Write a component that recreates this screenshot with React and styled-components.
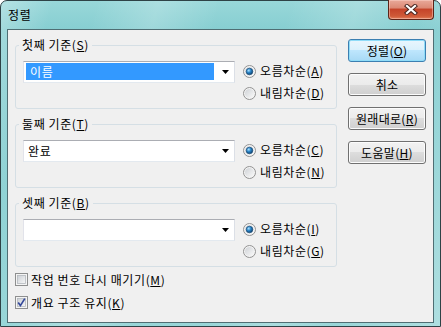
import styled, { createGlobalStyle } from "styled-components";

const GlobalStyle = createGlobalStyle`
  html, body {
    margin: 0;
    padding: 0;
    background: #ffffff;
  }
  body {
    font-family: "Noto Sans CJK KR", "Noto Sans", sans-serif;
    font-size: 12px;
    letter-spacing: 0.6px;
    color: #000;
  }
`;

const Frame = styled.div`
  box-sizing: border-box;
  width: 441px;
  height: 327px;
  display: flex;
  flex-direction: column;
  padding: 0 6px 3px;
  border: 1px solid #2e4246;
  border-radius: 7px 7px 0 0;
  background:
    linear-gradient(105deg,
      rgba(255, 255, 255, 0.28) 0%,
      rgba(255, 255, 255, 0) 10%,
      rgba(255, 255, 255, 0) 18%,
      rgba(255, 255, 255, 0.2) 30%,
      rgba(255, 255, 255, 0) 42%,
      rgba(255, 255, 255, 0) 55%,
      rgba(255, 255, 255, 0.18) 68%,
      rgba(255, 255, 255, 0) 80%,
      rgba(255, 255, 255, 0.22) 100%),
    linear-gradient(180deg, #98d7d9 0%, #86ced1 30px, #98d6d8 100%);
`;

const TitleBar = styled.div`
  height: 28px;
  display: flex;
  align-items: flex-start;
`;

const Title = styled.span`
  padding: 7px 0 0 1px;
  line-height: 14px;
  font-size: 12px;
`;

const CloseButton = styled.div`
  box-sizing: border-box;
  margin: -1px 0 0 auto;
  width: 46px;
  height: 20px;
  display: flex;
  align-items: center;
  justify-content: center;
  border: 1px solid #5b2418;
  border-top: none;
  border-radius: 0 0 4px 4px;
  background: linear-gradient(180deg, #e9a99a 0%, #dc8a76 40%, #c5442a 50%, #cf5a38 85%, #e2805c 100%);
  box-shadow: inset 0 0 0 1px rgba(255, 220, 210, 0.45);
`;

const Client = styled.div`
  flex: 1;
  display: flex;
  gap: 11px;
  padding: 8px 6px 0 7px;
  border: 1px solid #4f6e73;
  background: #f0f0f0;
`;

const LeftColumn = styled.div`
  width: 322px;
  display: flex;
  flex-direction: column;
`;

const Group = styled.fieldset`
  box-sizing: border-box;
  width: 322px;
  min-width: 0;
  margin: 0 0 8px;
  padding: 8px 7px 4px;
  border: 1px solid #d5dfe5;
  border-radius: 3px;
`;

const Legend = styled.legend`
  margin-left: -4px;
  padding: 0 3px;
  line-height: 14px;
  font-size: 12px;
`;

const GroupRow = styled.div`
  display: flex;
  align-items: flex-start;
`;

const Combo = styled.div`
  box-sizing: border-box;
  width: 212px;
  height: 22px;
  margin-top: 1px;
  display: flex;
  align-items: flex-start;
  padding: 1px 0 2px 2px;
  border: 1px solid #abadb3;
  border-left-color: #e2e3ea;
  border-right-color: #dbdfe6;
  border-bottom-color: #e3e9ef;
  background: #ffffff;
`;

const ComboValue = styled.div`
  width: 188px;
  height: 17px;
  padding-left: ${(p) => (p.$selected ? "4px" : "2px")};
  box-sizing: border-box;
  line-height: 17px;
  background: ${(p) => (p.$selected ? "#3399ff" : "transparent")};
  color: ${(p) => (p.$selected ? "#ffffff" : "#000000")};
`;

const ComboArrow = styled.div`
  flex: 1;
  height: 17px;
  display: flex;
  align-items: center;
  justify-content: center;
  padding-left: 3px;
`;

const RadioColumn = styled.div`
  margin-left: 8px;
  display: flex;
  flex-direction: column;
`;

const OptionRow = styled.label`
  height: ${(p) => p.$height || 22}px;
  display: flex;
  align-items: center;
  gap: ${(p) => p.$gap || 4}px;
  line-height: 14px;
`;

const Key = styled.u`
  text-decoration: underline;
  text-underline-offset: 1px;
`;

const ChecksBlock = styled.div`
  display: flex;
  flex-direction: column;
  margin-top: -7px;
`;

const ButtonColumn = styled.div`
  display: flex;
  flex-direction: column;
  gap: 11px;
  padding-top: 1px;
`;

const Button = styled.div`
  box-sizing: border-box;
  width: 78px;
  height: 23px;
  display: flex;
  align-items: center;
  justify-content: center;
  border: 1px solid ${(p) => (p.$default ? "#3c7fb1" : "#707070")};
  border-radius: 3px;
  background: ${(p) =>
    p.$default
      ? "linear-gradient(180deg, #eaf6fd 0%, #d9f0fc 50%, #bee6fd 50%, #a7d9f5 100%)"
      : "linear-gradient(180deg, #f2f2f2 0%, #ebebeb 50%, #dddddd 50%, #cfcfcf 100%)"};
  box-shadow: inset 0 0 0 1px ${(p) => (p.$default ? "#8fdcf8" : "#fcfcfc")};
  line-height: 14px;
  letter-spacing: 0.3px;
`;

const RadioIcon = ({ checked }) => (
  <svg width="13" height="13" viewBox="0 0 13 13">
    <defs>
      <linearGradient id="radioBg" x1="0" y1="0" x2="1" y2="1">
        <stop offset="0" stopColor="#cfd2d6" />
        <stop offset="1" stopColor="#fafafa" />
      </linearGradient>
      <radialGradient id="radioDot" cx="0.38" cy="0.35" r="0.7">
        <stop offset="0" stopColor="#aee2ff" />
        <stop offset="0.45" stopColor="#2a86c9" />
        <stop offset="1" stopColor="#0b3a66" />
      </radialGradient>
    </defs>
    <circle cx="6.5" cy="6.5" r="6" fill="#f4f4f4" stroke="#929292" />
    <circle cx="6.5" cy="6.5" r="4.6" fill="url(#radioBg)" />
    {checked && (
      <circle cx="6.5" cy="6.5" r="3.3" fill="url(#radioDot)" stroke="#1b4d78" strokeWidth="0.7" />
    )}
  </svg>
);

const CheckIcon = ({ checked }) => (
  <svg width="13" height="13" viewBox="0 0 13 13">
    <defs>
      <linearGradient id="checkBg" x1="0" y1="0" x2="1" y2="1">
        <stop offset="0" stopColor="#cbcfd5" />
        <stop offset="1" stopColor="#f7f7f7" />
      </linearGradient>
    </defs>
    <rect x="0.5" y="0.5" width="12" height="12" fill="#f4f4f4" stroke="#8e8f8f" />
    <rect x="2.5" y="2.5" width="8" height="8" fill="url(#checkBg)" stroke="#b4b8bd" strokeWidth="0.8" />
    {checked && (
      <path d="M3.2 6.6 L5.4 9.6 L9.8 2.6" fill="none" stroke="#34489a" strokeWidth="1.7" />
    )}
  </svg>
);

const CloseX = () => (
  <svg width="14" height="11" viewBox="0 0 14 11">
    <path d="M3 2 L11 9 M11 2 L3 9" stroke="#4a2620" strokeWidth="4.2" strokeLinecap="square" />
    <path d="M3 2 L11 9 M11 2 L3 9" stroke="#ffffff" strokeWidth="2.2" strokeLinecap="square" />
  </svg>
);

const DownArrow = () => (
  <svg width="7" height="4" viewBox="0 0 7 4">
    <path d="M0 0 H7 L3.5 4 Z" fill="#000" />
  </svg>
);

const Label = ({ text, hotkey }) => (
  <span>
    {text}(<Key>{hotkey}</Key>)
  </span>
);

const groups = [
  { title: "첫째 기준", key: "S", value: "이름", selected: true, asc: "A", desc: "D" },
  { title: "둘째 기준", key: "T", value: "완료", selected: false, asc: "C", desc: "N" },
  { title: "셋째 기준", key: "B", value: "", selected: false, asc: "I", desc: "G" },
];

const SortGroup = ({ group }) => (
  <Group>
    <Legend>
      <Label text={group.title} hotkey={group.key} />
    </Legend>
    <GroupRow>
      <Combo>
        <ComboValue $selected={group.selected}>{group.value}</ComboValue>
        <ComboArrow>
          <DownArrow />
        </ComboArrow>
      </Combo>
      <RadioColumn>
        <OptionRow>
          <RadioIcon checked />
          <Label text="오름차순" hotkey={group.asc} />
        </OptionRow>
        <OptionRow>
          <RadioIcon />
          <Label text="내림차순" hotkey={group.desc} />
        </OptionRow>
      </RadioColumn>
    </GroupRow>
  </Group>
);

export default function App() {
  return (
    <>
      <GlobalStyle />
      <Frame>
        <TitleBar>
          <Title>정렬</Title>
          <CloseButton>
            <CloseX />
          </CloseButton>
        </TitleBar>
        <Client>
          <LeftColumn>
            {groups.map((g) => (
              <SortGroup key={g.key} group={g} />
            ))}
            <ChecksBlock>
              <OptionRow $height={23} $gap={3}>
                <CheckIcon />
                <Label text="작업 번호 다시 매기기" hotkey="M" />
              </OptionRow>
              <OptionRow $height={23} $gap={3}>
                <CheckIcon checked />
                <Label text="개요 구조 유지" hotkey="K" />
              </OptionRow>
            </ChecksBlock>
          </LeftColumn>
          <ButtonColumn>
            <Button $default>
              <Label text="정렬" hotkey="O" />
            </Button>
            <Button>취소</Button>
            <Button>
              <Label text="원래대로" hotkey="R" />
            </Button>
            <Button>
              <Label text="도움말" hotkey="H" />
            </Button>
          </ButtonColumn>
        </Client>
      </Frame>
    </>
  );
}
